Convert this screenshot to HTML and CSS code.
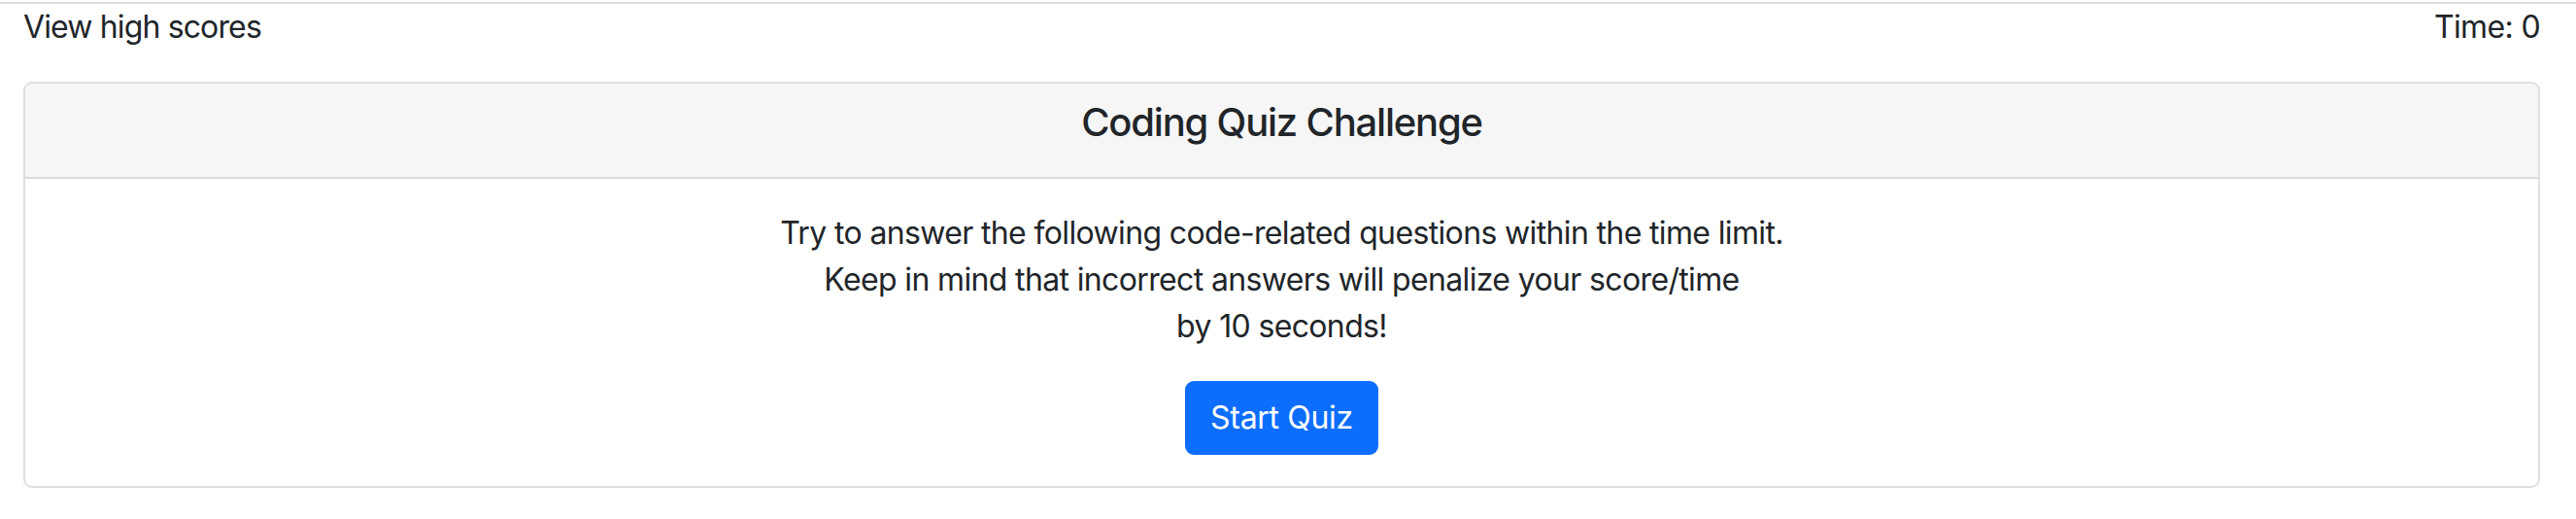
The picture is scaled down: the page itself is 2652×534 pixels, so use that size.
FILE: index.html
```html
<!DOCTYPE html>
<html lang="en">
<head>
<meta charset="utf-8">
<title>Coding Quiz Challenge</title>
<link rel="stylesheet" href="styles.css">
</head>
<body>
<div class="topline"></div>
<header class="topbar">
  <a class="scores-link" href="#">View high scores</a>
  <span class="timer">Time: <span>0</span></span>
</header>
<main class="wrap">
  <section class="card">
    <div class="card-header">
      <h5 class="card-title">Coding Quiz Challenge</h5>
    </div>
    <div class="card-body">
      <p class="intro">Try to answer the following code-related questions within the time limit.<br>Keep in mind that incorrect answers will penalize your score/time<br>by 10 seconds!</p>
      <button class="btn-primary" type="button">Start Quiz</button>
    </div>
  </section>
</main>
</body>
</html>
```
FILE: styles.css
```css
* { box-sizing: border-box; }
html, body { margin: 0; padding: 0; background: #fff; }
body {
  font-family: Inter, "Noto Sans", "Liberation Sans", sans-serif;
  font-size: 32px;
  line-height: 48px;
  letter-spacing: -0.02em;
  color: #212529;
}
.topline {
  margin-top: 2px;
  height: 2px;
  background: #dedede;
}
.topbar {
  display: flex;
  justify-content: space-between;
  padding: 0 37px 0 24px;
  height: 48px;
  margin-bottom: 32px;
}
.scores-link { color: #212529; text-decoration: none; letter-spacing: -0.027em; }
.wrap { padding: 0 37px 0 24px; }
.card {
  border: 2px solid #dfdfdf;
  border-radius: 9px;
  overflow: hidden;
}
.card-header {
  background: #f6f6f6;
  border-bottom: 2px solid #dadada;
  padding: 16px 32px;
  text-align: center;
}
.card-title {
  margin: 0 0 16px;
  font-size: 40px;
  line-height: 48px;
  font-weight: 500;
  letter-spacing: -0.03em;
}
.card-body {
  padding: 32px;
  text-align: center;
}
.intro { margin: 0 0 32px; }
.btn-primary {
  font: inherit;
  letter-spacing: -0.01em;
  color: #fff;
  background: #0d6efd;
  border: 2px solid #0d6efd;
  border-radius: 9px;
  padding: 12px 24px;
  line-height: 48px;
  cursor: pointer;
}
```
